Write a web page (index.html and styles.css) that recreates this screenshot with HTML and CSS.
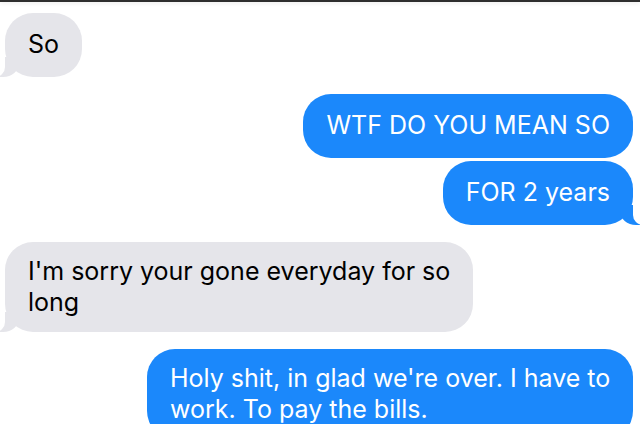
FILE: index.html
```html
<!DOCTYPE html>
<html lang="en">
<head>
    <meta charset="UTF-8">
    <meta name="viewport" content="width=device-width, initial-scale=1.0">
    <title>Messages</title>
    <link rel="stylesheet" href="styles.css">
</head>
<body>
    <div class="screen">
        <div class="topbar"></div>
        <div class="thread">
            <div class="bubble in tail">So</div>
            <div class="bubble out">WTF DO YOU MEAN SO</div>
            <div class="bubble out tail grouped">FOR 2 years</div>
            <div class="bubble in two tail">I'm sorry your gone everyday for so long</div>
            <div class="bubble out two">Holy shit, in glad we're over. I have to work. To pay the bills.</div>
        </div>
    </div>
</body>
</html>
```

FILE: styles.css
```css
body {
    margin: 0;
    background: #fff;
    font-family: Inter, "Liberation Sans", sans-serif;
}
.screen {
    height: 424px;
    overflow: hidden;
}
.topbar {
    height: 2px;
    background: #2e2e2e;
    box-shadow: 0 1px 4px rgba(0, 0, 0, 0.12);
}
.thread {
    display: flex;
    flex-direction: column;
    padding: 11px 7px 0 5px;
}
.bubble {
    position: relative;
    padding: 16px 23px 17px;
    font-size: 25px;
    line-height: 31px;
    border-radius: 28px;
    margin-top: 17px;
}
.bubble:first-child {
    margin-top: 0;
}
.bubble.grouped {
    margin-top: 3px;
}
.bubble.two {
    padding-top: 14px;
    padding-bottom: 14px;
}
.in {
    align-self: flex-start;
    background: #e5e5ea;
    color: #000;
}
.out {
    align-self: flex-end;
    background: #1b88fb;
    color: #fff;
}
.in.two {
    max-width: 428px;
    padding-right: 17px;
}
.out.two {
    max-width: 448px;
    padding-right: 15px;
}

/* tails */
.tail::before,
.tail::after {
    content: "";
    position: absolute;
    bottom: 0;
    height: 20px;
}
.in.tail::before {
    left: -6px;
    width: 20px;
    background: #e5e5ea;
    border-bottom-right-radius: 16px 14px;
}
.in.tail::after {
    left: -26px;
    width: 26px;
    background: #fff;
    border-bottom-right-radius: 10px;
}
.out.tail::before {
    right: -7px;
    width: 20px;
    background: #1b88fb;
    border-bottom-left-radius: 16px 14px;
}
.out.tail::after {
    right: -26px;
    width: 26px;
    background: #fff;
    border-bottom-left-radius: 10px;
}
```
